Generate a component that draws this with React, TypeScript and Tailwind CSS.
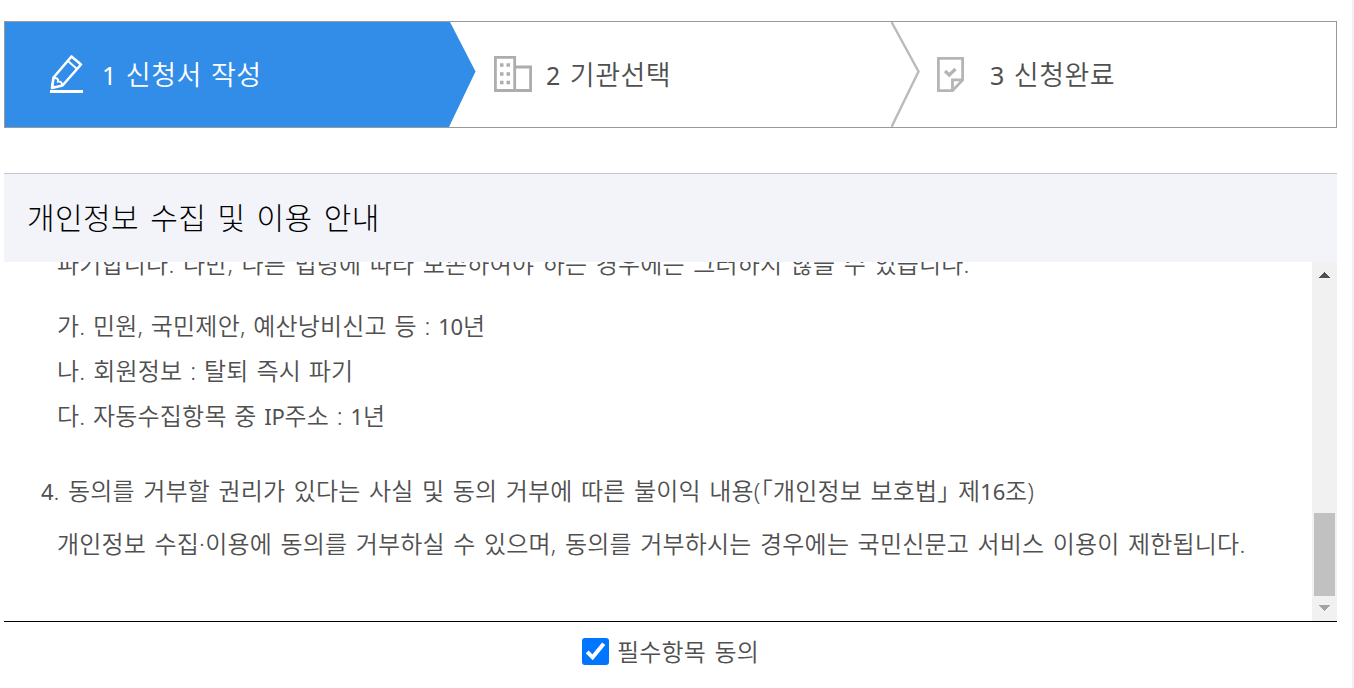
import { useState } from "react";
import clsx from "clsx";

const FONT = "font-['Noto_Sans','Noto_Sans_CJK_KR',sans-serif]";

/* Last part of the notice, the panel is scrolled to its end */
const notice = [
  { text: "파기합니다. 다만, 다른 법령에 따라 보존하여야 하는 경우에는 그러하지 않을 수 있습니다.", className: "-mt-[21px] h-[45px] pl-[53px]" },
  { text: "가. 민원, 국민제안, 예산낭비신고 등 : 10년", className: "mt-[17px] h-[45px] pl-[53px] [word-spacing:1.2px]" },
  { text: "나. 회원정보 : 탈퇴 즉시 파기", className: "h-[45px] pl-[53px] [word-spacing:1.4px]" },
  { text: "다. 자동수집항목 중 IP주소 : 1년", className: "h-[45px] pl-[53px] [word-spacing:1.2px]" },
  { text: "4. 동의를 거부할 권리가 있다는 사실 및 동의 거부에 따른 불이익 내용(「개인정보 보호법」 제16조)", className: "mt-[30px] h-[45px] pl-[37px]" },
  { text: "개인정보 수집·이용에 동의를 거부하실 수 있으며, 동의를 거부하시는 경우에는 국민신문고 서비스 이용이 제한됩니다.", className: "mt-2 h-[45px] pl-[53px]" },
];

/* Latin runs are set a little smaller, the closing bracket at half width */
function NoticeText({ text }: { text: string }) {
  return text.split(/([A-Z0-9]+|」)/).map((part, i) => {
    if (part === "」") return <span key={i} className="[font-feature-settings:'halt']">{part}</span>;
    if (i % 2 === 1) return <span key={i} className="text-[22px] font-normal tracking-[-0.2px]">{part}</span>;
    return part;
  });
}

function PencilIcon() {
  return (
    <svg width="34" height="40" viewBox="0 0 34 40" fill="none" stroke="#fff" strokeWidth="2.6" className="-mt-px">
      <path d="M21.500 2.500 31 10.500 12.500 31.500 2 34 3.500 23.500Z" strokeLinejoin="round" />
      <path d="M18 7 27 15M3.500 24C7 23.500 8.500 25 8 27.500 10.500 27 12 28.500 12 31" strokeWidth="2" />
      <path d="M1 34V29L6 33Z" fill="#fff" stroke="none" />
      <path d="M0 37.500H33" strokeWidth="3" />
    </svg>
  );
}

function BuildingIcon() {
  return (
    <svg width="38" height="36" viewBox="0 0 38 36" fill="none" stroke="#adadad" strokeWidth="2.8" className="-mt-px">
      <path d="M1.400 1.400H20.700V34.500H1.400Z" />
      <path d="M20.700 11H36.600V34.500H20.700" />
      <path
        d="M6 9h3.500M12.500 9h3.500M6 18h3.500M12.500 18h3.500M6 26.500h3.500M12.500 26.500h3.500"
        strokeWidth="3.500"
      />
    </svg>
  );
}

function DocumentIcon() {
  return (
    <svg width="27" height="35" viewBox="0 0 27 35" fill="none" stroke="#b5b5b5" strokeWidth="2.800">
      <path d="M1.400 1.400H25.600V23L15.500 33.600H1.400Z" />
      <path d="M15.500 33.600V22.800H25.600" />
      <path d="M8 14 12.300 18 18.500 12" strokeWidth="3.300" />
    </svg>
  );
}

function Checkbox({ checked, onChange }: { checked: boolean; onChange: () => void }) {
  return (
    <button
      type="button"
      role="checkbox"
      aria-checked={checked}
      onClick={onChange}
      className={clsx(
        "h-[27px] w-[27px] shrink-0 rounded-[3px]",
        checked ? "bg-[#0075ff]" : "border border-[#767676] bg-white",
      )}
    >
      {checked && (
        <svg width="27" height="27" viewBox="0 0 27 27" fill="none" stroke="#fff" strokeWidth="4">
          <path d="M5.200 13.800 10.600 19.300 21.700 5.700" />
        </svg>
      )}
    </button>
  );
}

function StepLabel({ no, label, className }: { no: number; label: string; className: string }) {
  return (
    <span className={clsx("mt-0.5", className)}>
      <span className="text-[25px] font-normal">{no}</span> {label}
    </span>
  );
}

function Steps() {
  return (
    <ol className="flex h-[107px] border border-[#999] text-[27px] tracking-[0.5px] text-[#505050] [word-spacing:1.5px]">
      <li className="flex w-[471px] text-white">
        <div className="flex w-[444px] items-center bg-[#328de8] pl-[45px]">
          <PencilIcon />
          <StepLabel no={1} label="신청서 작성" className="ml-[18px]" />
        </div>
        <svg width="27" height="105" viewBox="0 0 27 105" fill="#328de8">
          <path d="M0 0H1L26.500 49.500 0 105Z" />
        </svg>
      </li>
      <li className="flex w-[444px]">
        <div className="flex w-[415px] items-center pl-[18px]">
          <BuildingIcon />
          <StepLabel no={2} label="기관선택" className="ml-[14px]" />
        </div>
        <svg width="29" height="105" viewBox="0 0 29 105" fill="none" stroke="#bbb" strokeWidth="2.400">
          <path d="M.5 0 27.500 49.500 .5 105" />
        </svg>
      </li>
      <li className="flex flex-1 items-center pl-[17px]">
        <DocumentIcon />
        <StepLabel no={3} label="신청완료" className="ml-[26px]" />
      </li>
    </ol>
  );
}

function Scrollbar() {
  return (
    <div className="flex w-[25px] shrink-0 flex-col items-center bg-[#f1f1f1]">
      <svg width="25" height="25" viewBox="0 0 25 25" fill="#505050" shapeRendering="crispEdges">
        <path d="M7 16 12.500 10 18 16Z" />
      </svg>
      <div className="mt-[226px] h-[83px] w-[21px] bg-[#c1c1c1]" />
      <svg width="25" height="25" viewBox="0 0 25 25" fill="#a3a3a3" shapeRendering="crispEdges">
        <path d="M7 9 12.500 15 18 9Z" />
      </svg>
    </div>
  );
}

export default function App() {
  const [agreed, setAgreed] = useState(true);

  return (
    <div className={clsx("h-[688px] overflow-hidden border-r-2 border-[#f1f1f1] bg-white pt-[21px] pr-[15px] pl-1 font-[350] whitespace-nowrap", FONT)}>
      <Steps />

      <section className="mt-[45px]">
        <h2 className="flex h-[89px] items-center border-t border-[#c3c6cb] bg-[#f3f4f9] pb-0.5 pl-[23px] text-[30px] font-light tracking-[0.4px] text-black [word-spacing:3px]">
          개인정보 수집 및 이용 안내
        </h2>
        <div className="flex h-[360px] overflow-hidden border-b border-black">
          <div className="min-w-0 flex-1 overflow-hidden text-[24px] leading-[45px] tracking-[0.2px] text-[#505050] [word-spacing:2px]">
            {notice.map((line) => (
              <p key={line.text} className={line.className}>
                <NoticeText text={line.text} />
              </p>
            ))}
          </div>
          <Scrollbar />
        </div>
      </section>

      <div className="mt-4 flex items-center justify-center text-[24px] leading-[27px] tracking-[0.2px] text-[#505050] [word-spacing:2px]">
        <Checkbox checked={agreed} onChange={() => setAgreed(!agreed)} />
        <span className="ml-2">필수항목 동의</span>
      </div>
    </div>
  );
}
